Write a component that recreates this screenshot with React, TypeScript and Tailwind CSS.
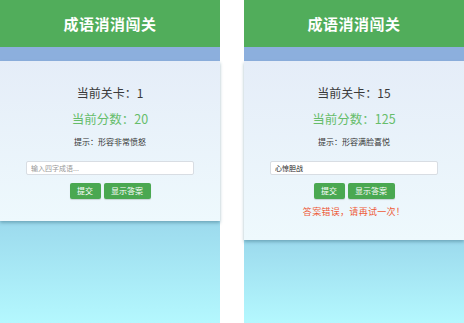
const font = { fontFamily: '"Noto Sans CJK SC", "Noto Sans", sans-serif' };

type Screen = {
  level: number;
  score: number;
  hint: string;
  value: string;
  error?: string;
};

const screens: Screen[] = [
  { level: 1, score: 20, hint: '形容非常愤怒', value: '' },
  { level: 15, score: 125, hint: '形容满脸喜悦', value: '心惊胆战', error: '答案错误，请再试一次！' },
];

const Phone = ({ s }: { s: Screen }) => (
  <div className="flex flex-col w-[220px] h-full">
    {/* Header */}
    <div className="h-[47px] bg-[#51ad5b] flex items-center justify-center">
      <h1 className="text-white font-bold text-[15px] leading-none tracking-[0.5px]">成语消消闯关</h1>
    </div>
    <div className="h-[14px] bg-[#8cafdd]" />

    {/* Game panel */}
    <div className="flex flex-col items-center pt-[24px] pb-[22px] bg-gradient-to-b from-[#e5edf8] to-[#eef9fd] shadow-[0_2px_3px_rgba(60,110,130,0.45)] relative z-10">
      <p className="text-[12px] leading-[16px] text-[#3a3a3a]">当前关卡：{s.level}</p>
      <p className="mt-[10px] text-[12.5px] leading-[16px] text-[#66bd6a]">当前分数：{s.score}</p>
      <p className="mt-[9px] text-[8px] leading-[12px] text-[#333]">提示：{s.hint}</p>
      <input
        readOnly
        value={s.value}
        placeholder="输入四字成语..."
        className="mt-[13px] w-[168px] h-[14px] px-[4px] bg-white border border-[#d8dde3] rounded-[2px] text-[7px] text-[#222] placeholder:text-[#999] outline-none"
        style={font}
      />
      <div className="mt-[8px] flex gap-[3px]">
        <button className="h-[16px] w-[31px] rounded-[2px] bg-[#4aa851] text-white text-[8px] leading-none shadow-[0_1px_1px_rgba(0,0,0,0.15)]">
          提交
        </button>
        <button className="h-[16px] w-[47px] rounded-[2px] bg-[#4aa851] text-white text-[8px] leading-none shadow-[0_1px_1px_rgba(0,0,0,0.15)]">
          显示答案
        </button>
      </div>
      {s.error && (
        <p className="mt-[7px] text-[9px] leading-[12px] text-[#ee5b38] tracking-[0.3px]">{s.error}</p>
      )}
    </div>
    <div className="flex-1 bg-gradient-to-b from-[#9cdaed] to-[#b4f8fe]" />
  </div>
);

export default function App() {
  return (
    <div className="w-[464px] h-[323px] bg-white flex gap-[24px] overflow-hidden" style={font}>
      {screens.map((s) => (
        <Phone key={s.level} s={s} />
      ))}
    </div>
  );
}
